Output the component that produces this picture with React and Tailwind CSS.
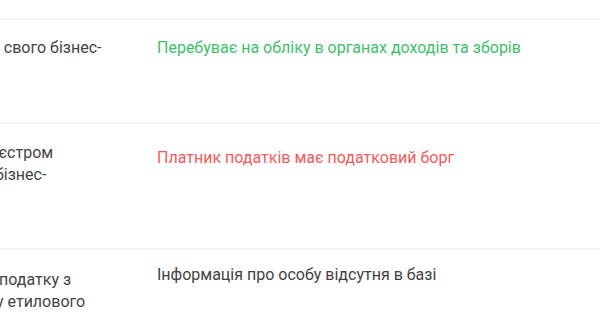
const rows = [
  {
    left: [['до свого бізнес-', '-ml-[19px]']],
    right: 'Перебуває на обліку в органах доходів та зборів',
    tone: 'text-[#3fbf6b]',
    height: 'h-[104px]',
    leftPad: 'pt-[17px]',
    rightPad: 'pt-[17px]',
  },
  {
    left: [
      ['реєстром', '-ml-[19px]'],
      ['бізнес-', '-ml-[5px]'],
    ],
    right: 'Платник податків має податковий борг',
    tone: 'text-[#f25b5b]',
    height: 'h-[126px]',
    leftPad: 'pt-[18px]',
    rightPad: 'pt-[23px]',
  },
  {
    left: [
      ['податку з', '-ml-[1px]'],
      ['у етилового', '-ml-[4px]'],
    ],
    right: 'Інформація про особу відсутня в базі',
    tone: 'text-[#424242]',
    height: 'h-[90px]',
    leftPad: 'pt-[19px]',
    rightPad: 'pt-[14px]',
  },
];

function Row({ row }) {
  return (
    <div className={`flex border-t-2 border-[#f2f2f2] ${row.height}`}>
      <div className={`w-[157px] shrink-0 overflow-hidden ${row.leftPad}`}>
        {row.left.map(([text, shift], i) => (
          <div key={i} className={`whitespace-nowrap leading-[22px] ${shift}`}>
            {text}
          </div>
        ))}
      </div>
      <div className={`flex-1 leading-[22px] ${row.rightPad} ${row.tone}`}>
        {row.right}
      </div>
    </div>
  );
}

export default function App() {
  return (
    <div
      className="w-[600px] h-[326px] overflow-hidden bg-white text-[16px] text-[#444444]"
      style={{ fontFamily: 'Roboto, "Noto Sans", sans-serif' }}
    >
      <div className="h-[18px]" />
      {rows.map((row, i) => (
        <Row key={i} row={row} />
      ))}
    </div>
  );
}
